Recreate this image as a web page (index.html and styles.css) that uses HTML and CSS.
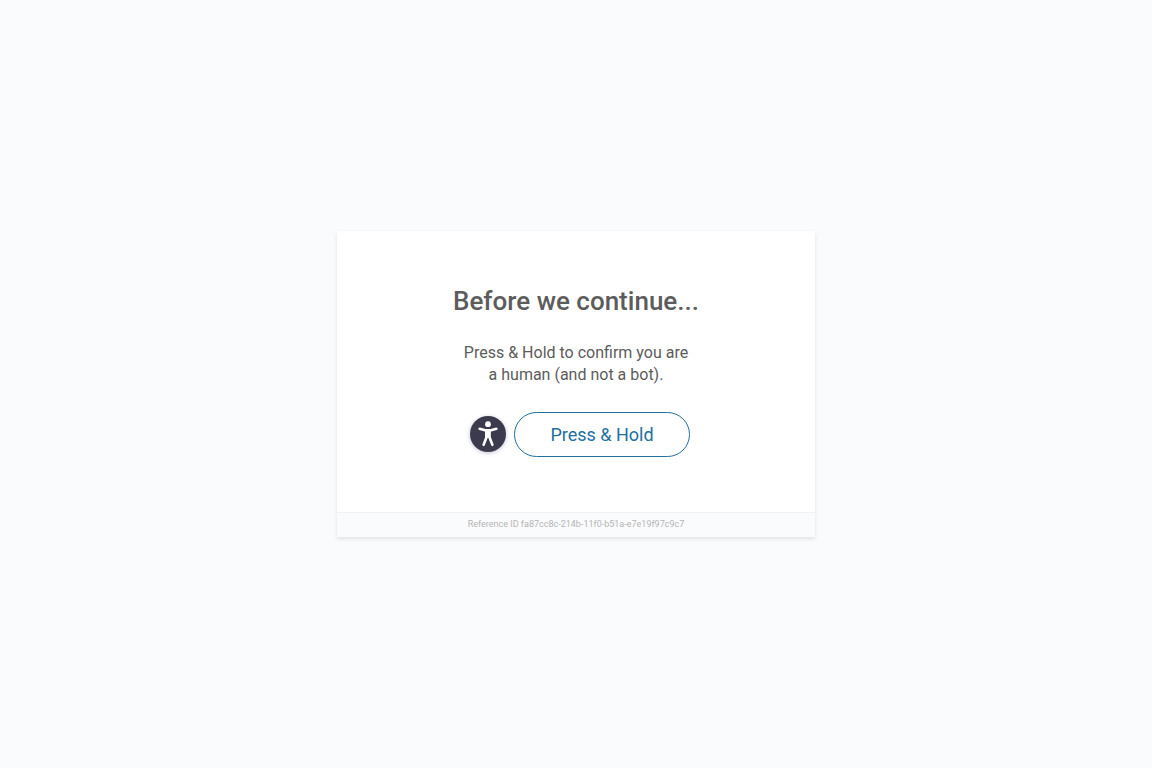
FILE: index.html
```
<!DOCTYPE html>
<html lang="en">
<head>
  <meta charset="UTF-8">
  <meta name="viewport" content="width=device-width, initial-scale=1.0">
  <title>Before we continue...</title>
  <link rel="stylesheet" href="styles.css">
</head>
<body>

  <main class="card">
    <div class="content">
      <h1>Before we continue...</h1>
      <p class="message">Press &amp; Hold to confirm you are<br>a human (and not a bot).</p>

      <div class="actions">
        <button type="button" class="accessibility" aria-label="Accessibility challenge">
          <svg viewBox="0 0 36 36" aria-hidden="true">
            <circle cx="18" cy="8.2" r="2.9"/>
            <path d="M9.6 12.8 L16 14.4 H20 L26.4 12.8 M16.6 15 V21 L13.6 28.8 M19.4 15 V21 L22.4 28.8"/>
            <path class="torso" d="M16 14 H20 V21.5 H16 Z"/>
          </svg>
        </button>
        <button type="button" class="hold">Press &amp; Hold</button>
      </div>
    </div>

    <footer class="reference">Reference ID fa87cc8c-214b-11f0-b51a-e7e19f97c9c7</footer>
  </main>

</body>
</html>
```
FILE: styles.css
```
html, body {
  height: 100%;
  margin: 0;
}

body {
  display: flex;
  align-items: center;
  justify-content: center;
  background-color: #fafbfd;
  color: #5c5c5c;
  font-family: Roboto, "Liberation Sans", sans-serif;
}

.card {
  width: 100%;
  max-width: 478px;
  background-color: #fff;
  box-shadow: 0 2px 4px rgba(0, 0, 0, 0.1);
  text-align: center;
}

.content {
  padding: 54px 20px 55px;
}

h1 {
  margin: 0 0 25px;
  font-size: 26px;
  font-weight: 500;
  line-height: 32px;
}

.message {
  margin: 0 0 26px;
  font-size: 16px;
  line-height: 22px;
}

.actions {
  display: flex;
  align-items: center;
  justify-content: center;
  gap: 8px;
  padding-left: 8px;
}

button {
  padding: 0;
  font-family: inherit;
  cursor: pointer;
}

.accessibility {
  width: 36px;
  height: 36px;
  margin-bottom: 2px;
  border: none;
  border-radius: 50%;
  background-color: #3c3b4e;
  box-shadow: 0 1px 4px rgba(60, 59, 100, 0.3);
}

.accessibility svg {
  display: block;
  fill: #fff;
  stroke: none;
}

.accessibility path {
  fill: none;
  stroke: #fff;
  stroke-width: 2.6;
  stroke-linecap: round;
  stroke-linejoin: round;
}

.accessibility .torso {
  fill: #fff;
  stroke-width: 1;
}

.hold {
  padding: 0 35px;
  border: 1px solid #21709f;
  border-radius: 23px;
  background-color: #fff;
  color: #21709f;
  font-size: 18px;
  line-height: 43px;
}

.reference {
  padding-bottom: 2px;
  border-top: 1px solid #eff1f3;
  background-color: #fafbfd;
  color: #b5b5b5;
  font-size: 9px;
  line-height: 22px;
}
```
